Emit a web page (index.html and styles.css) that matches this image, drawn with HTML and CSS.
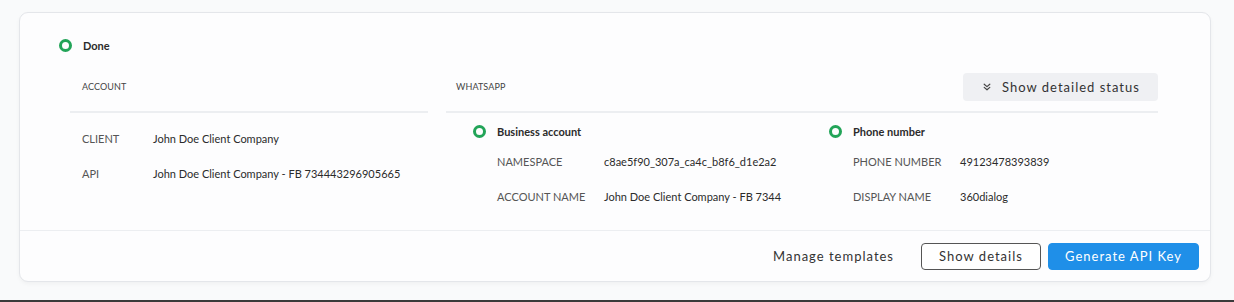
FILE: index.html
```html
<!DOCTYPE html>
<html lang="en">
<head>
<meta charset="utf-8">
<title>Channel status</title>
<link rel="stylesheet" href="styles.css">
</head>
<body>
<div class="page">
  <div class="card">
    <div class="card-body">
      <div class="status-row">
        <span class="ring"></span>
        <span class="status-title">Done</span>
      </div>
      <div class="columns">
        <section class="col col-account">
          <div class="col-head">
            <span class="col-label">ACCOUNT</span>
          </div>
          <div class="kv-list kv-account">
            <div class="kv"><span class="k">CLIENT</span><span class="v">John Doe Client Company</span></div>
            <div class="kv"><span class="k">API</span><span class="v">John Doe Client Company - FB 734443296905665</span></div>
          </div>
        </section>
        <section class="col col-wa">
          <div class="col-head">
            <span class="col-label">WHATSAPP</span>
            <button class="btn-status">
              <svg class="chev" width="8" height="8" viewBox="0 0 8 8" fill="none" stroke="#444" stroke-width="1.2" stroke-linecap="round" stroke-linejoin="round"><path d="M1.2 1.2 4 3.6 6.8 1.2M1.2 4.4 4 6.8 6.8 4.4"/></svg>
              Show detailed status
            </button>
          </div>
          <div class="wa-grid">
            <div class="wa-block">
              <div class="sub-title"><span class="ring"></span><span>Business account</span></div>
              <div class="kv"><span class="k">NAMESPACE</span><span class="v">c8ae5f90_307a_ca4c_b8f6_d1e2a2</span></div>
              <div class="kv"><span class="k">ACCOUNT NAME</span><span class="v">John Doe Client Company - FB 7344</span></div>
            </div>
            <div class="wa-block">
              <div class="sub-title"><span class="ring"></span><span>Phone number</span></div>
              <div class="kv"><span class="k">PHONE NUMBER</span><span class="v">49123478393839</span></div>
              <div class="kv"><span class="k">DISPLAY NAME</span><span class="v">360dialog</span></div>
            </div>
          </div>
        </section>
      </div>
    </div>
    <div class="card-foot">
      <button class="btn btn-text">Manage templates</button>
      <button class="btn btn-outline">Show details</button>
      <button class="btn btn-primary">Generate API Key</button>
    </div>
  </div>
  <div class="bottom-rule"></div>
</div>
</body>
</html>
```
FILE: styles.css
```css
* { box-sizing: border-box; }
html, body { margin: 0; padding: 0; }
body {
  background: #f9fafb;
  font-family: Lato, "Noto Sans", "Liberation Sans", sans-serif;
  color: #333;
  width: 1234px;
  height: 302px;
  overflow: hidden;
}
.page {
  height: 302px;
  display: flex;
  flex-direction: column;
  padding-top: 12px;
}
.card {
  margin-left: 19px;
  width: 1192px;
  height: 270px;
  background: #fdfdfe;
  border: 1px solid #e4e6ea;
  border-radius: 9px;
  box-shadow: 0 2px 4px rgba(0,0,0,0.04);
  display: flex;
  flex-direction: column;
}
.card-body {
  flex: 1;
  padding: 24px 52px 0 39px;
}
.status-row {
  display: flex;
  align-items: center;
  height: 16px;
  gap: 11px;
}
.ring {
  width: 13px;
  height: 13px;
  border-radius: 50%;
  border: 3.5px solid #22a458;
  flex: none;
}
.status-title {
  font-size: 11px;
  font-weight: 700;
  color: #2b2b2b;
}
.columns {
  margin-top: 20px;
  margin-left: 11px;
  display: grid;
  grid-template-columns: 358px 712px;
  column-gap: 18px;
}
.col-head {
  height: 40px;
  display: flex;
  align-items: flex-start;
  justify-content: space-between;
  border-bottom: 2px solid #eceef1;
}
.col-label {
  font-size: 9px;
  color: #444;
  line-height: 28px;
  letter-spacing: 0.1px;
}
.col-account .col-label { padding-left: 12px; }
.col-wa .col-label { padding-left: 10px; }
.btn-status {
  height: 28px;
  width: 195px;
  border: none;
  border-radius: 4px;
  background: #eff0f3;
  font-family: inherit;
  font-size: 13px;
  letter-spacing: 1px;
  color: #333;
  display: flex;
  align-items: center;
  justify-content: center;
  gap: 11px;
  padding: 0 0 0 2px;
}
.chev { flex: none; }
.kv-account { padding-top: 8px; padding-left: 12px; }
.kv {
  display: flex;
  align-items: center;
  height: 35px;
  font-size: 11px;
}
.k {
  color: #555;
  flex: none;
}
.kv-account .k { width: 71px; }
.v { color: #2b2b2b; }
.wa-grid {
  display: grid;
  grid-template-columns: 356px 356px;
  padding-left: 27px;
  padding-top: 10px;
}
.sub-title {
  display: flex;
  align-items: center;
  gap: 11px;
  height: 16px;
  font-size: 11px;
  font-weight: 700;
  color: #2b2b2b;
  margin-bottom: 5px;
}
.wa-block .kv { padding-left: 24px; }
.wa-block .k { width: 107px; }
.card-foot {
  height: 51px;
  border-top: 1px solid #eceef1;
  display: flex;
  align-items: center;
  justify-content: flex-end;
  padding: 0 11px 0 0;
  gap: 8px;
}
.btn {
  height: 27px;
  font-family: inherit;
  font-size: 13px;
  letter-spacing: 1px;
  border-radius: 4px;
  background: none;
  border: 1px solid transparent;
  color: #333;
  padding: 0 14px;
}
.btn-text { margin-right: 18px; padding: 0; }
.btn-outline {
  width: 120px;
  border-color: #555;
  background: #fff;
  margin-right: -1px;
}
.btn-primary {
  width: 151px;
  background: #1f8fe8;
  border-color: #1f8fe8;
  color: #fff;
}
.bottom-rule {
  margin-top: auto;
  height: 2px;
  background: #3a3a3a;
}
```
